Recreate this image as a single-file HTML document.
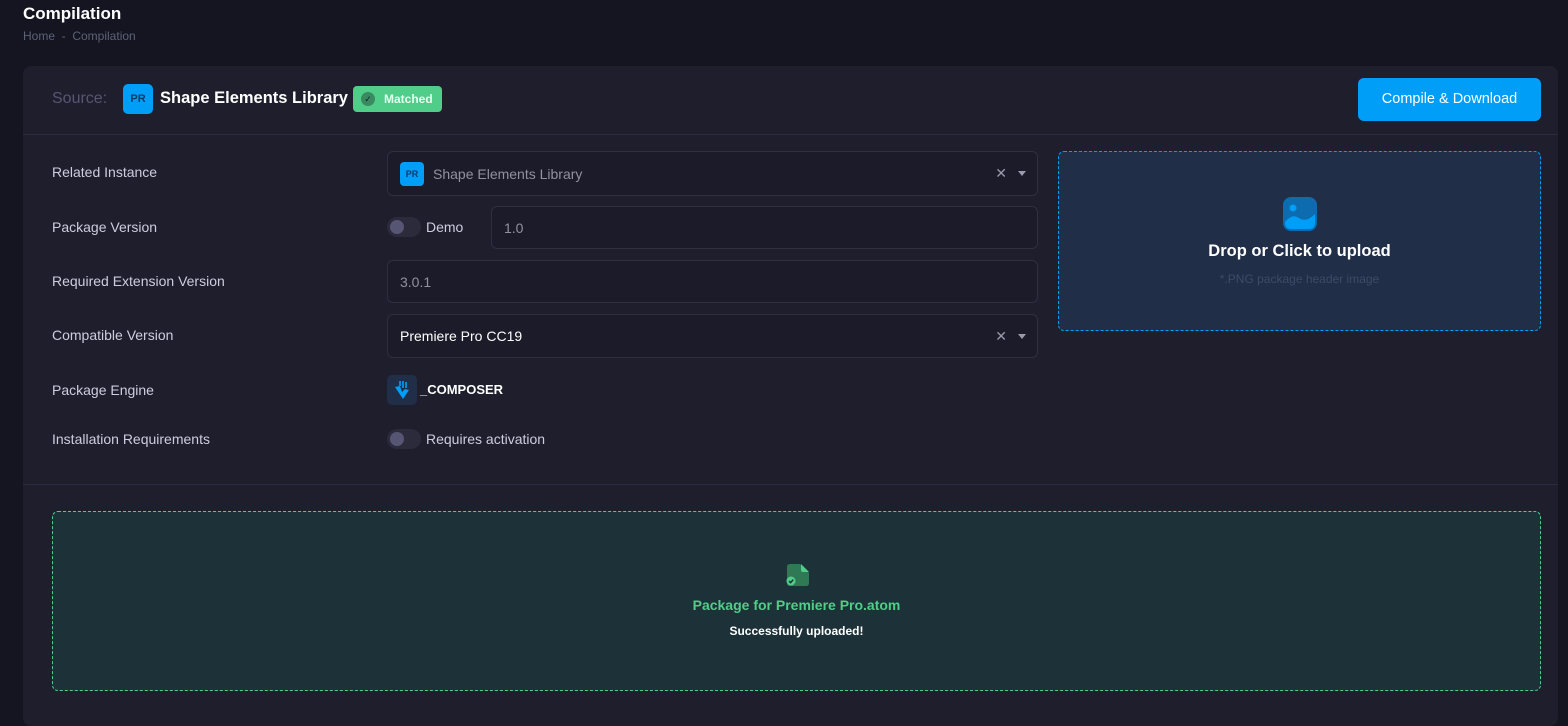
<!DOCTYPE html>
<html><head><meta charset="utf-8"><style>
*{box-sizing:border-box;margin:0;padding:0}
body{width:1568px;height:717px;background:#151521;font-family:"Liberation Sans",sans-serif;color:#fff;position:relative;overflow:hidden}
.a{position:absolute}
.lbl{position:absolute;left:52px;font-size:14px;color:#cdcde0}
.inp{position:absolute;background:#1b1b29;border:1px solid #2f2f40;border-radius:6px;font-size:14px;color:#92929f;padding-left:12px;display:flex;align-items:center}
.tog{position:absolute;width:34px;height:20px;border-radius:10px;background:#2b2b3b}
.tog:after{content:"";position:absolute;left:3px;top:3px;width:14px;height:14px;border-radius:50%;background:#565674}
.x{position:absolute;right:30px;color:#9a9aab;font-size:14px}
.car{position:absolute;right:11px;top:19px;border:4px solid transparent;border-top:5px solid #9a9aab}
</style></head><body>
<div class="a" style="left:23px;top:4px;font-size:17px;font-weight:bold">Compilation</div>
<div class="a" style="left:23px;top:29px;font-size:12px;color:#5e6278">Home &nbsp;-&nbsp; Compilation</div>
<div class="a" style="left:23px;top:66px;width:1535px;height:660px;background:#1e1e2d;border-radius:8px"></div>
<div class="a" style="left:23px;top:134px;width:1535px;height:1px;background:#2b2b40"></div>
<div class="a" style="left:23px;top:484px;width:1535px;height:1px;background:#2b2b40"></div>
<div class="a" style="left:52px;top:90px;font-size:16px;color:#565674">Source:</div>
<div class="a" style="left:123px;top:84px;width:30px;height:30px;background:#009ef7;border-radius:5px;font-size:11px;font-weight:bold;color:#0b3a6b;text-align:center;line-height:30px">PR</div>
<div class="a" style="left:160px;top:89px;font-size:16.5px;font-weight:bold">Shape Elements Library</div>
<div class="a" style="left:353px;top:86px;width:89px;height:26px;background:#50cd89;border-radius:4px"><div class="a" style="left:8px;top:6px;width:14px;height:14px;border-radius:50%;background:#3a8a60;color:#123;font-size:9px;text-align:center;line-height:14px">✓</div><div class="a" style="left:31px;top:6px;font-size:12px;font-weight:bold;color:#e8fff2">Matched</div></div>
<div class="a" style="left:1358px;top:78px;width:183px;height:43px;background:#009ef7;border-radius:6px;font-size:14.5px;text-align:center;line-height:43px">Compile &amp; Download</div>

<div class="lbl" style="top:164px">Related Instance</div>
<div class="lbl" style="top:219px">Package Version</div>
<div class="lbl" style="top:273px">Required Extension Version</div>
<div class="lbl" style="top:327px">Compatible Version</div>
<div class="lbl" style="top:382px">Package Engine</div>
<div class="lbl" style="top:431px">Installation Requirements</div>

<div class="inp" style="left:387px;top:151px;width:651px;height:45px"><div style="width:24px;height:24px;background:#009ef7;border-radius:4px;font-size:9px;font-weight:bold;color:#0b3a6b;text-align:center;line-height:24px;margin-right:9px">PR</div>Shape Elements Library<span class="x" style="top:13px">✕</span><span class="car"></span></div>
<div class="tog" style="left:387px;top:217px"></div>
<div class="a" style="left:426px;top:219px;font-size:14px;color:#cdcde0">Demo</div>
<div class="inp" style="left:491px;top:206px;width:547px;height:43px">1.0</div>
<div class="inp" style="left:387px;top:260px;width:651px;height:43px">3.0.1</div>
<div class="inp" style="left:387px;top:314px;width:651px;height:44px;color:#fff">Premiere Pro CC19<span class="x" style="top:13px">✕</span><span class="car"></span></div>
<div class="a" style="left:387px;top:375px;width:30px;height:30px;background:#212e48;border-radius:5px">
<svg class="a" style="left:7px;top:5px" width="16" height="20" viewBox="0 0 16 20"><path d="M1 7 L6 6 L8 12 L11 9 L15 10 L9 19 Z" fill="#009ef7"/><path d="M6 1 V6 M9 1 V8 M12 2 V8" stroke="#009ef7" stroke-width="1.6"/></svg></div>
<div class="a" style="left:420px;top:382px;font-size:13px;font-weight:bold">_COMPOSER</div>
<div class="tog" style="left:387px;top:429px"></div>
<div class="a" style="left:426px;top:431px;font-size:14px;color:#cdcde0">Requires activation</div>

<div class="a" style="left:1058px;top:151px;width:483px;height:180px;background:#212e48;border:1px dashed #009ef7;border-radius:6px">
<svg class="a" style="left:224px;top:45px" width="34" height="34" viewBox="0 0 34 34"><rect width="34" height="34" rx="8" fill="#0d6bb0"/><circle cx="10" cy="11" r="3.5" fill="#009ef7"/><path d="M2 25 Q9 16 16 21 T32 17 V26 Q32 32 26 32 H8 Q2 32 2 26Z" fill="#009ef7"/></svg>
<div class="a" style="left:0;width:100%;top:90px;text-align:center;font-size:16.5px;font-weight:bold">Drop or Click to upload</div>
<div class="a" style="left:0;width:100%;top:120px;text-align:center;font-size:12px;color:#3f4a66">*.PNG package header image</div>
</div>

<div class="a" style="left:52px;top:511px;width:1489px;height:180px;background:#1c3238;border:1px dashed #50cd89;border-radius:6px">
<svg class="a" style="left:733px;top:51px" width="26" height="25" viewBox="0 0 26 25"><path d="M4 1 H14 L23 10 V20 Q23 23 20 23 H4 Q1 23 1 20 V4 Q1 1 4 1Z" fill="#2f7a55"/><path d="M15 1 L23 9 H17 Q15 9 15 7Z" fill="#50cd89"/><circle cx="5" cy="18" r="4.5" fill="#50cd89"/><path d="M3 18 L4.6 19.6 L7.2 16.6" stroke="#1c3238" stroke-width="1.5" fill="none"/></svg>
<div class="a" style="left:0;width:100%;top:85px;text-align:center;font-size:14px;font-weight:bold;color:#50cd89">Package for Premiere Pro.atom</div>
<div class="a" style="left:0;width:100%;top:112px;text-align:center;font-size:12px;font-weight:bold">Successfully uploaded!</div>
</div>
</body></html>
